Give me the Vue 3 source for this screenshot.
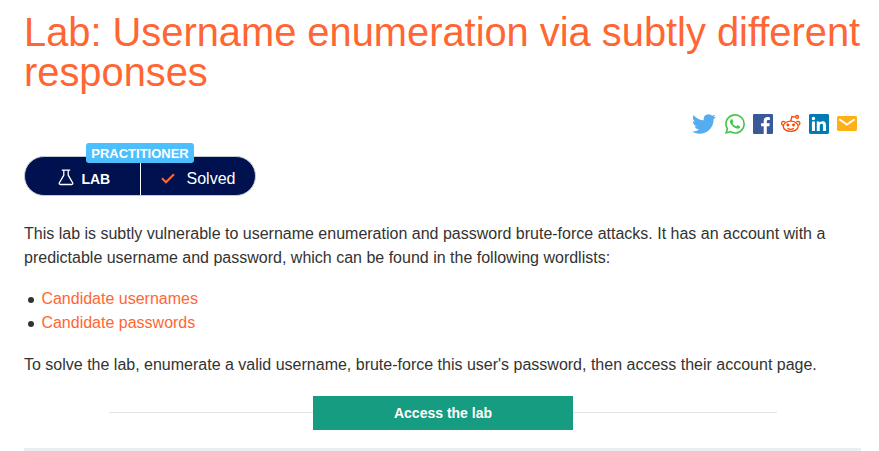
<script setup>
const wordlists = ['Candidate usernames', 'Candidate passwords']
</script>

<template>
  <main class="page">
    <h1 class="title">Lab: Username enumeration via subtly different responses</h1>

    <div class="share">
      <a class="share-link twitter" aria-label="Twitter">
        <svg width="24" height="24" viewBox="0 0 24 24" fill="#55acee">
          <path d="M23.953 4.57a10 10 0 01-2.825.775 4.958 4.958 0 002.163-2.723c-.951.555-2.005.959-3.127 1.184a4.92 4.92 0 00-8.384 4.482C7.69 8.095 4.067 6.13 1.64 3.162a4.822 4.822 0 00-.666 2.475c0 1.71.87 3.213 2.188 4.096a4.904 4.904 0 01-2.228-.616v.06a4.923 4.923 0 003.946 4.827 4.996 4.996 0 01-2.212.085 4.936 4.936 0 004.604 3.417 9.867 9.867 0 01-6.102 2.105c-.39 0-.779-.023-1.17-.067a13.995 13.995 0 007.557 2.209c9.053 0 13.998-7.496 13.998-13.985 0-.21 0-.42-.015-.63A9.935 9.935 0 0024 4.59z" />
        </svg>
      </a>
      <a class="share-link" aria-label="WhatsApp">
        <svg width="20" height="20" viewBox="0 0 24 24" fill="#43c64b">
          <path d="M17.472 14.382c-.297-.149-1.758-.867-2.03-.967-.273-.099-.471-.148-.67.15-.197.297-.767.966-.94 1.164-.173.199-.347.223-.644.075-.297-.15-1.255-.463-2.39-1.475-.883-.788-1.48-1.761-1.653-2.059-.173-.297-.018-.458.13-.606.134-.133.298-.347.446-.52.149-.174.198-.298.298-.497.099-.198.05-.371-.025-.52-.075-.149-.669-1.612-.916-2.207-.242-.579-.487-.5-.669-.51-.173-.008-.371-.01-.57-.01-.198 0-.52.074-.792.372-.272.297-1.04 1.016-1.04 2.479 0 1.462 1.065 2.875 1.213 3.074.149.198 2.096 3.2 5.077 4.487.709.306 1.262.489 1.694.625.712.227 1.36.195 1.871.118.571-.085 1.758-.719 2.006-1.413.248-.694.248-1.289.173-1.413-.074-.124-.272-.198-.57-.347m-5.421 7.403h-.004a9.87 9.87 0 01-5.031-1.378l-.361-.214-3.741.982.998-3.648-.235-.374a9.86 9.86 0 01-1.51-5.26c.001-5.45 4.436-9.884 9.888-9.884 2.64 0 5.122 1.03 6.988 2.898a9.825 9.825 0 012.893 6.994c-.003 5.45-4.437 9.884-9.885 9.884m8.413-18.297A11.815 11.815 0 0012.05 0C5.495 0 .16 5.335.157 11.892c0 2.096.547 4.142 1.588 5.945L.057 24l6.305-1.654a11.882 11.882 0 005.683 1.448h.005c6.554 0 11.89-5.335 11.893-11.893a11.821 11.821 0 00-3.48-8.413z" />
        </svg>
      </a>
      <a class="share-link" aria-label="Facebook">
        <svg width="20" height="20" viewBox="0 0 20 20">
          <rect width="20" height="20" rx="1" fill="#3b5998" />
          <path d="M13.8 20v-7.7h2.6l.4-3h-3V7.4c0-.9.25-1.5 1.5-1.5h1.6V3.2a21 21 0 0 0-2.3-.1c-2.3 0-3.9 1.4-3.9 4v2.2H8.1v3h2.6V20z" fill="#fff" />
        </svg>
      </a>
      <a class="share-link" aria-label="Reddit">
        <svg width="20" height="20" viewBox="0 0 20 20" fill="none" stroke="#ff4500" stroke-width="1.3">
          <path d="M4 8.2A1.9 1.9 0 1 0 2 11.1" />
          <path d="M15.4 8.2a1.9 1.9 0 1 1 2 2.9" />
          <ellipse cx="9.7" cy="12.3" rx="7.5" ry="5.1" />
          <path d="M9.7 7.2l1.2-4.7 3.6.6" />
          <circle cx="16.1" cy="2.9" r="1.4" />
          <path d="M6.6 14.2c1.8 1.4 4.4 1.4 6.2 0" />
          <circle cx="6.9" cy="11" r="1.45" fill="#ff4500" stroke="none" />
          <circle cx="12.5" cy="11" r="1.45" fill="#ff4500" stroke="none" />
        </svg>
      </a>
      <a class="share-link" aria-label="LinkedIn">
        <svg width="20" height="20" viewBox="0 0 24 24">
          <path fill="#007bb6" d="M20.447 20.452h-3.554v-5.569c0-1.328-.027-3.037-1.852-3.037-1.853 0-2.136 1.445-2.136 2.939v5.667H9.351V9h3.414v1.561h.046c.477-.9 1.637-1.85 3.37-1.85 3.601 0 4.267 2.37 4.267 5.455v6.286zM5.337 7.433a2.062 2.062 0 01-2.063-2.065 2.064 2.064 0 112.063 2.065zm1.782 13.019H3.555V9h3.564v11.452zM22.225 0H1.771C.792 0 0 .774 0 1.729v20.542C0 23.227.792 24 1.771 24h20.451C23.2 24 24 23.227 24 22.271V1.729C24 .774 23.2 0 22.222 0h.003z" />
        </svg>
      </a>
      <a class="share-link" aria-label="Email">
        <svg width="20" height="20" viewBox="0 0 20 20">
          <rect y="2" width="20" height="15" rx="1.4" fill="#ffb015" />
          <path d="M2.3 5.3L10 10.6l7.7-5.3" fill="none" stroke="#fff" stroke-width="1.9" />
        </svg>
      </a>
    </div>

    <div class="status">
      <span class="level">PRACTITIONER</span>
      <div class="kind">
        <svg class="flask" width="16" height="17" viewBox="0 0 16 17" fill="none" stroke="#fff" stroke-width="1.3">
          <path d="M3.8 1.2h8.4M5.8 1.2v5L1.4 13.7q-.8 1.8 1 1.8h11.2q1.8 0 1-1.8L10.2 6.2v-5" />
        </svg>
        <span>LAB</span>
      </div>
      <div class="state">
        <svg class="check" width="14" height="11" viewBox="0 0 14 11" fill="none" stroke="#ff6633" stroke-width="2.2">
          <path d="M1 5.2l4 4L13 1.2" />
        </svg>
        <span>Solved</span>
      </div>
    </div>

    <p class="text">This lab is subtly vulnerable to username enumeration and password brute-force attacks. It has an account with a predictable username and password, which can be found in the following wordlists:</p>
    <ul class="wordlists">
      <li v-for="name in wordlists" :key="name"><a>{{ name }}</a></li>
    </ul>
    <p class="text">To solve the lab, enumerate a valid username, brute-force this user's password, then access their account page.</p>

    <div class="launch">
      <a class="button">Access the lab</a>
    </div>
    <hr class="rule" />
  </main>
</template>

<style>
body {
  background: #fff;
  overflow: hidden;
}
</style>

<style scoped>
.page {
  box-sizing: border-box;
  width: 879px;
  height: 451px;
  padding: 12px 18px 0 24px;
  font-family: "Liberation Sans", Arial, sans-serif;
  font-size: 16px;
  line-height: 24px;
  color: #333332;
}
.title {
  margin: 0 -10px 0 0;
  font-size: 39.84px;
  line-height: 40px;
  font-weight: 400;
  color: #ff6633;
}
.share {
  display: flex;
  justify-content: flex-end;
  gap: 8px;
  height: 20px;
  margin: 22px 4px 0 0;
}
.share-link {
  display: flex;
  align-items: center;
  justify-content: center;
  width: 20px;
  height: 20px;
}
.share-link svg {
  flex: none;
}
.twitter {
  width: 26px;
}
.status {
  position: relative;
  box-sizing: border-box;
  display: flex;
  width: 232px;
  height: 40px;
  margin-top: 22px;
  border: 1px solid #c5cbd0;
  border-radius: 20px;
  background: #00114f;
  color: #fff;
}
.level {
  position: absolute;
  left: 61px;
  top: -14px;
  box-sizing: border-box;
  width: 108px;
  height: 20px;
  border-radius: 3px;
  background: #4dbfff;
  font-size: 13px;
  font-weight: 700;
  line-height: 21px;
  text-align: center;
}
.kind {
  box-sizing: border-box;
  display: flex;
  width: 116px;
  padding: 10px 0 0 33px;
  border-right: 1px solid #fff;
  font-size: 14px;
  font-weight: 700;
}
.flask {
  margin: 2px 7.4px 0 0;
}
.state {
  display: flex;
  padding: 10px 0 0 20px;
}
.check {
  margin: 6px 11.5px 0 0;
}
.text {
  margin: 26px 0 0;
}
.wordlists {
  margin: 17px 0 -8px;
  padding: 0;
  list-style: none;
}
.wordlists li {
  display: flex;
  align-items: center;
  gap: 7.6px;
}
.wordlists li::before {
  content: "";
  width: 6px;
  height: 6px;
  margin: 2px 0 0 3.8px;
  border-radius: 50%;
  background: #333332;
}
.wordlists a {
  color: #ff6633;
}
.launch {
  display: flex;
  align-items: center;
  width: 668px;
  margin: 19px 0 0 85px;
}
.launch::before,
.launch::after {
  content: "";
  flex: 1;
  height: 1px;
  margin-bottom: 1px;
  background: #e3e3e3;
}
.button {
  width: 260px;
  height: 34px;
  background: #169c80;
  color: #fff;
  font-size: 14px;
  font-weight: 700;
  line-height: 34px;
  text-align: center;
}
.rule {
  height: 3px;
  margin: 18px 0 0;
  border: 0;
  background: #e9eef2;
}
</style>
